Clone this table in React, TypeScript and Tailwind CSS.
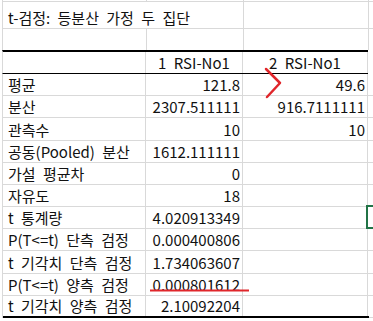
import React from 'react';

type Row = {
  label: string;
  b?: string;
  c?: string;
  h: number;
};

const rows: Row[] = [
  { label: '평균', b: '121.8', c: '49.6', h: 22 },
  { label: '분산', b: '2307.511111', c: '916.7111111', h: 22 },
  { label: '관측수', b: '10', c: '10', h: 23 },
  { label: '공동(Pooled) 분산', b: '1612.111111', h: 22 },
  { label: '가설 평균차', b: '0', h: 22 },
  { label: '자유도', b: '18', h: 22 },
  { label: 't 통계량', b: '4.020913349', h: 22 },
  { label: 'P(T<=t) 단측 검정', b: '0.000400806', h: 22 },
  { label: 't 기각치 단측 검정', b: '1.734063607', h: 23 },
  { label: 'P(T<=t) 양측 검정', b: '0.000801612', h: 22 },
  { label: 't 기각치 양측 검정', b: '2.10092204', h: 22 },
];

const cols = 'grid grid-cols-[144px_97px_125px_1fr]';
const cell = 'border-r border-[#d9d9d9] flex items-end pb-[1px] overflow-visible whitespace-nowrap leading-[18px]';

const App: React.FC = () => {
  return (
    <div
      className="relative w-[373px] h-[321px] bg-white overflow-hidden text-[15px] text-[#111] [word-spacing:4px]"
      style={{ fontFamily: '"Noto Sans CJK KR", "Noto Sans", sans-serif' }}
    >
      <div className="pl-[2px]">
        {/* top grid line */}
        <div className={`${cols} h-[2px] border-b border-[#d9d9d9] border-l`}>
          <div className="border-r border-[#d9d9d9]" />
          <div className="border-r border-[#d9d9d9]" />
          <div className="border-r border-[#d9d9d9]" />
          <div />
        </div>

        {/* title */}
        <div className={`${cols} h-[27px] border-b border-[#d9d9d9] border-l`}>
          <div className={`${cell} pl-[5px] border-r-0`}>t-검정: 등분산 가정 두 집단</div>
          <div className={cell} />
          <div className={cell} />
          <div />
        </div>

        {/* empty row */}
        <div className={`${cols} h-[21px] border-l border-[#d9d9d9]`}>
          <div className={cell} />
          <div className={cell} />
          <div className={cell} />
          <div />
        </div>

        {/* header row */}
        <div className={`${cols} h-[24px]`}>
          <div className="col-span-3 border-t-2 border-b border-black grid grid-cols-[143px_97px_125px] border-l border-l-[#d9d9d9]">
            <div className={cell} />
            <div className={`${cell} justify-center`}>1 RSI-No1</div>
            <div className={`${cell} justify-center`}>2 RSI-No1</div>
          </div>
          <div />
        </div>

        {rows.map((r, i) => (
          <div
            key={i}
            className={`${cols} border-l border-[#d9d9d9]`}
            style={{ height: r.h }}
          >
            <div
              className={`col-span-3 grid grid-cols-[143px_97px_125px] ${
                i === rows.length - 1 ? 'border-b-2 border-black' : 'border-b border-[#d9d9d9]'
              }`}
            >
              <div className={`${cell} pl-[5px]`}>{r.label}</div>
              <div className={`${cell} justify-end pr-[2px]`}>{r.b}</div>
              <div className={`${cell} justify-end pr-[2px]`}>{r.c}</div>
            </div>
            <div className="border-b border-[#d9d9d9]" />
          </div>
        ))}
      </div>

      {/* active cell */}
      <div className="absolute left-[366px] top-[205px] w-[20px] h-[24px] border-2 border-[#217346]" />

      {/* red marks */}
      <svg className="absolute left-0 top-0" width="373" height="321">
        <polyline
          points="266,69 270,73 280,83 267,97"
          fill="none"
          stroke="#e0262b"
          strokeWidth="2.5"
          strokeLinecap="round"
          strokeLinejoin="round"
        />
        <line x1="150" y1="290.5" x2="249" y2="290.5" stroke="#e0262b" strokeWidth="2" />
      </svg>
    </div>
  );
};

export default App;
